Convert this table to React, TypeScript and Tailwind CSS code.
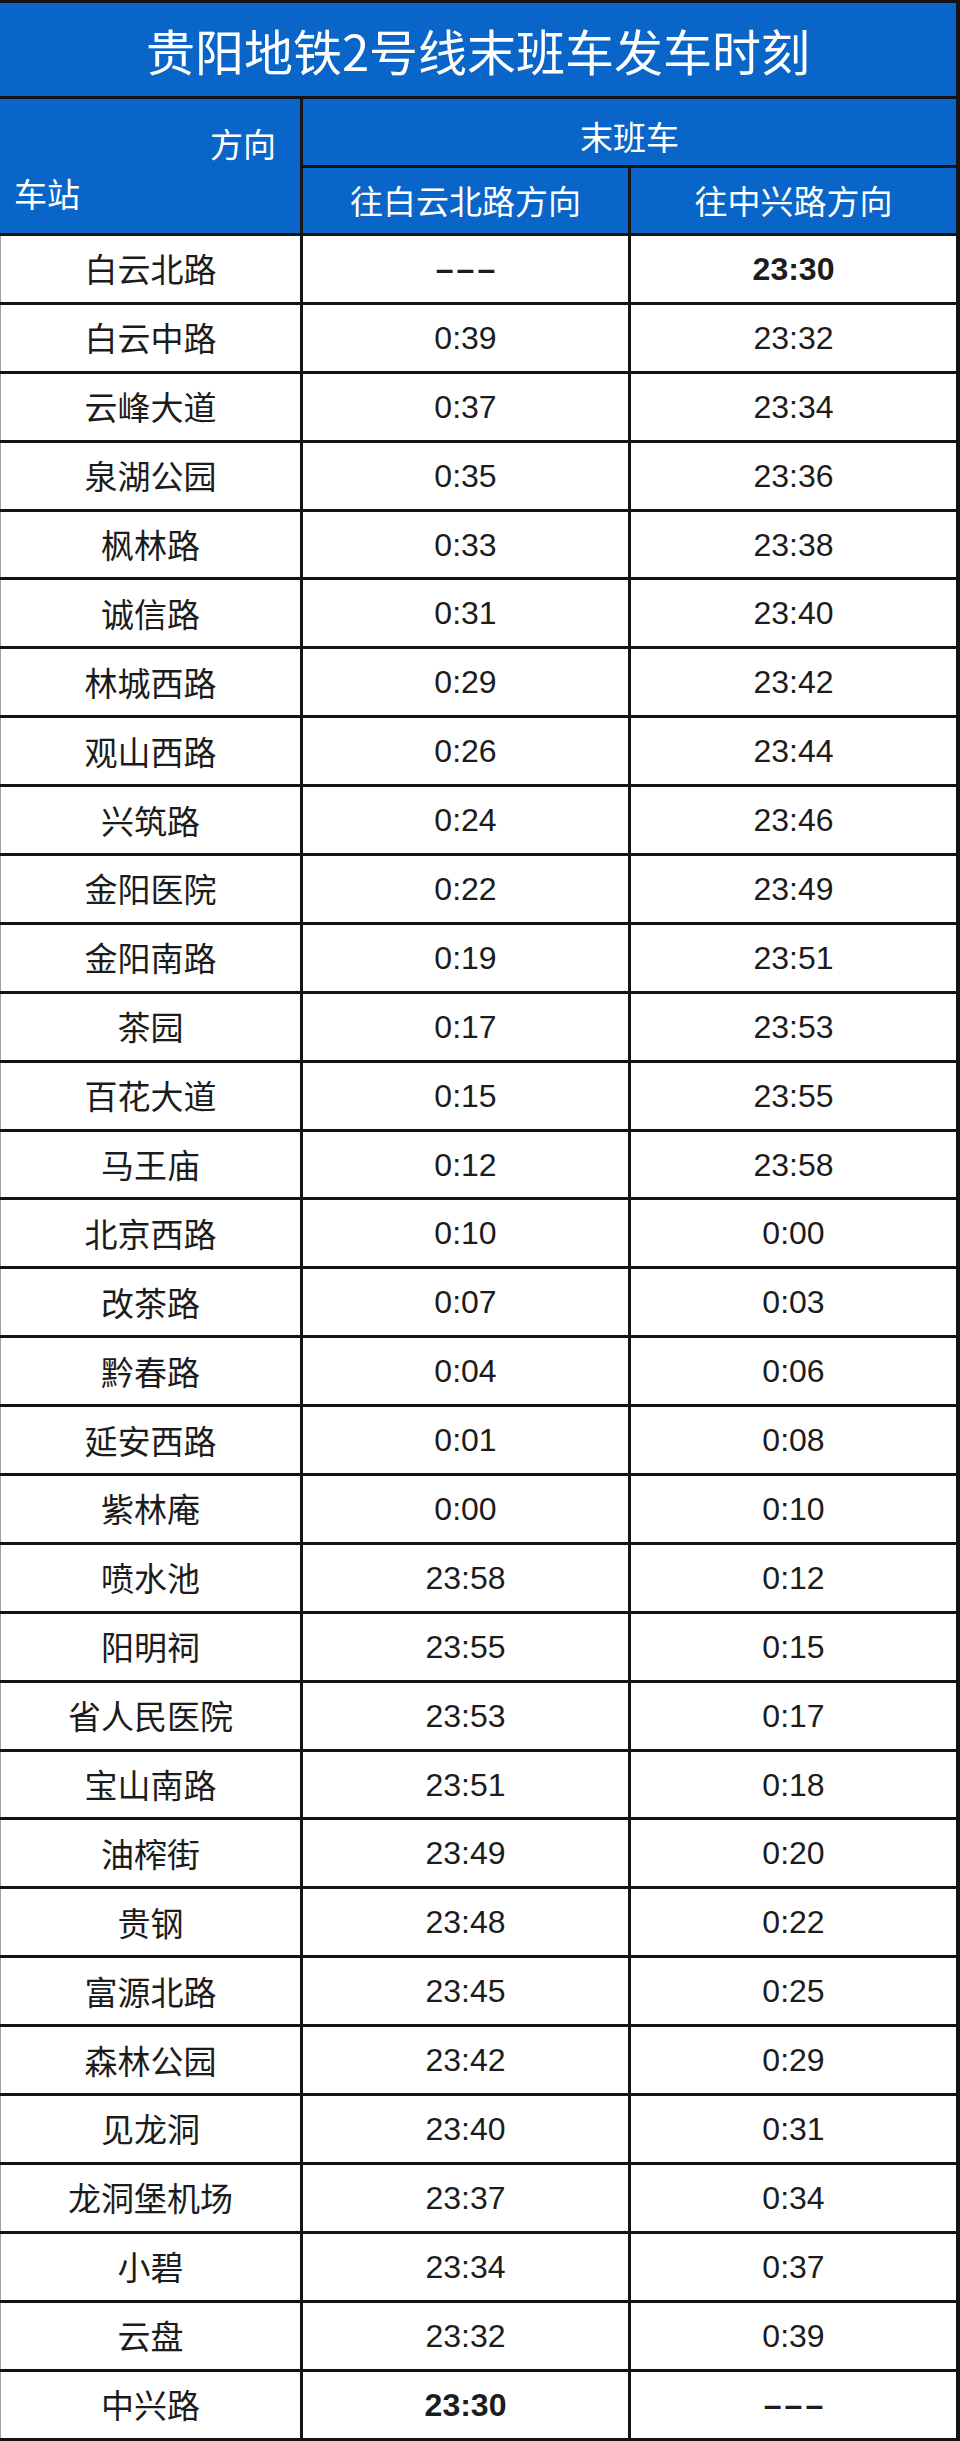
const rows: [string, string, string][] = [
  ["白云北路", "–––", "23:30"],
  ["白云中路", "0:39", "23:32"],
  ["云峰大道", "0:37", "23:34"],
  ["泉湖公园", "0:35", "23:36"],
  ["枫林路", "0:33", "23:38"],
  ["诚信路", "0:31", "23:40"],
  ["林城西路", "0:29", "23:42"],
  ["观山西路", "0:26", "23:44"],
  ["兴筑路", "0:24", "23:46"],
  ["金阳医院", "0:22", "23:49"],
  ["金阳南路", "0:19", "23:51"],
  ["茶园", "0:17", "23:53"],
  ["百花大道", "0:15", "23:55"],
  ["马王庙", "0:12", "23:58"],
  ["北京西路", "0:10", "0:00"],
  ["改茶路", "0:07", "0:03"],
  ["黔春路", "0:04", "0:06"],
  ["延安西路", "0:01", "0:08"],
  ["紫林庵", "0:00", "0:10"],
  ["喷水池", "23:58", "0:12"],
  ["阳明祠", "23:55", "0:15"],
  ["省人民医院", "23:53", "0:17"],
  ["宝山南路", "23:51", "0:18"],
  ["油榨街", "23:49", "0:20"],
  ["贵钢", "23:48", "0:22"],
  ["富源北路", "23:45", "0:25"],
  ["森林公园", "23:42", "0:29"],
  ["见龙洞", "23:40", "0:31"],
  ["龙洞堡机场", "23:37", "0:34"],
  ["小碧", "23:34", "0:37"],
  ["云盘", "23:32", "0:39"],
  ["中兴路", "23:30", "–––"],
];

const cjk = "font-['Noto_Sans_CJK_SC',sans-serif]";
const num = "font-['Liberation_Sans','Noto_Sans_CJK_SC',sans-serif]";

function TimeCell({ value, strong }: { value: string; strong: boolean }) {
  const isDash = value.startsWith("–");
  return (
    <div className="flex items-center justify-center bg-white">
      <span
        className={`${num} text-[32px] leading-none text-[#1c1c1c] ${strong ? "font-bold" : ""} ${
          isDash ? "tracking-[3px] pl-[3px]" : ""
        }`}
      >
        {value}
      </span>
    </div>
  );
}

export default function App() {
  return (
    <div className="flex h-[2441px] w-[960px] flex-col overflow-hidden bg-[#141414]">
      {/* title */}
      <div className="mt-[3px] mr-[4px] flex h-[93px] items-center justify-center bg-[#0a65c9]">
        <h1 className={`${cjk} text-[49px] leading-none text-white`}>贵阳地铁2号线末班车发车时刻</h1>
      </div>

      {/* header */}
      <div className="mt-[3px] mr-[4px] grid grid-cols-[300px_325px_325px] grid-rows-[66px_65px] gap-[3px] text-white">
        <div className={`${cjk} row-span-2 flex flex-col bg-[#0a65c9] text-[33px] leading-none`}>
          <span className="pt-[28px] pr-[24px] text-right">方向</span>
          <span className="mt-[17px] pl-[14px]">车站</span>
        </div>
        <div className={`${cjk} col-span-2 flex items-center justify-center bg-[#0a65c9] pt-[9px] text-[33px] leading-none`}>
          末班车
        </div>
        <div className={`${cjk} flex items-center justify-center bg-[#0a65c9] text-[33px] leading-none`}>
          往白云北路方向
        </div>
        <div className={`${cjk} flex items-center justify-center bg-[#0a65c9] text-[33px] leading-none`}>
          往中兴路方向
        </div>
      </div>

      {/* rows */}
      <div className="mt-[3px] mr-[4px] grid auto-rows-[65.9px] grid-cols-[300px_325px_325px] gap-[3px]">
        {rows.map(([station, toBaiyun, toZhongxing], i) => {
          const edge = i === 0 || i === rows.length - 1;
          return (
            <div key={station} className="contents">
              <div className="flex items-center justify-center border-l border-[#a0a0a0] bg-white">
                <span className={`${cjk} text-[33px] leading-none text-[#1c1c1c]`}>{station}</span>
              </div>
              <TimeCell value={toBaiyun} strong={edge} />
              <TimeCell value={toZhongxing} strong={edge} />
            </div>
          );
        })}
      </div>
    </div>
  );
}
